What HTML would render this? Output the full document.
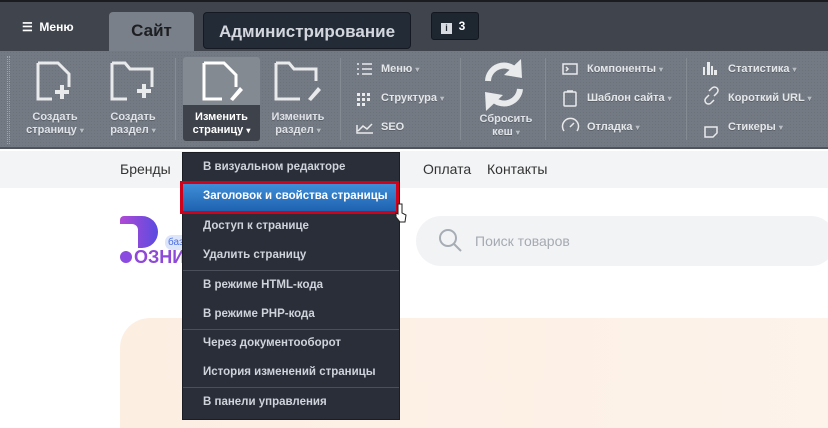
<!DOCTYPE html>
<html><head><meta charset="utf-8"><style>
*{margin:0;padding:0;box-sizing:border-box}
body{width:828px;height:420px;overflow:hidden;background:#fff;font-family:"Liberation Sans",Arial,sans-serif;position:relative}
.abs{position:absolute}
#top{left:0;top:0;width:828px;height:51px;background:#40454d;border-top:2px solid #1a1c20}
#tb{left:0;top:51px;width:828px;height:98px;background:#747a83;background-image:radial-gradient(#6c727a 0.6px,transparent 0.7px);background-size:3px 3px;border-bottom:2px solid #50555c}
.tab{top:12px;height:39px;font-weight:bold;font-size:17px;text-align:center;line-height:38px;border-radius:4px 4px 0 0}
.lbl{font-size:11px;color:#dfe3e8;text-align:center;line-height:13px;text-shadow:0 1px 0 #5a6068;font-weight:bold}
.sm{font-size:11px;color:#e4e7ea;font-weight:bold;text-shadow:0 1px 0 #5a6068}
.sep{top:58px;width:1px;height:82px;background:#656b73;border-right:1px solid #858b93}
.arr{color:#b8bdc4;font-size:8px}
#menu{left:182px;top:152px;width:218px;height:268px;background:#2a2e39;border:1px solid #1a1d24}
.it{position:absolute;left:20px;font-size:11.5px;color:#cfd3da;font-weight:bold}
.dv{position:absolute;left:0;width:216px;height:1px;background:#4a4f5a}
</style></head><body>
<div id="top" class="abs"></div>
<div class="abs" style="left:22px;top:20px;color:#fff;font-size:12px;font-weight:bold">☰&nbsp; Меню</div>
<div class="abs tab" style="left:109px;width:85px;background:#7a8089;color:#1c1e22">Сайт</div>
<div class="abs tab" style="left:203px;width:208px;height:37px;background:#232b37;color:#d4d8de;border:1px solid #151a22;border-radius:4px">Администрирование</div>
<div class="abs" style="left:431px;top:12px;width:48px;height:28px;background:#1e2630;border:1px solid #131820;border-radius:3px;color:#fff;font-weight:bold;font-size:12px;line-height:26px">
<span style="display:inline-block;margin-left:9px;width:11px;height:11px;background:#d8dce0;color:#1e2630;font-size:9px;line-height:11px;text-align:center;vertical-align:-1px">i</span>&nbsp; 3</div>
<div id="tb" class="abs"></div>
<div class="abs" style="left:7px;top:56px;width:3px;height:88px;border-left:1px dotted #a0a5ab;border-right:1px dotted #a0a5ab"></div>
<!-- active button -->
<div class="abs" style="left:183px;top:57px;width:77px;height:83px;background:#848a92;border-radius:3px"></div>
<div class="abs" style="left:183px;top:105px;width:77px;height:36px;background:#3e434b;border-radius:0 0 3px 3px"></div>
<svg class="abs" style="left:0;top:51px" width="828" height="98" fill="none" stroke="#e8eaec" stroke-width="3">
<!-- create page -->
<path d="M38 12V48H52M38 12H58L69 23V36"/><path d="M62 34V48M55 41H69" stroke-width="4"/>
<!-- create section -->
<path d="M112 12V48H127M112 12H125L130 18H152V36"/><path d="M144 33V47M137 40H151" stroke-width="4"/>
<!-- edit page -->
<path d="M204 12V48H222M204 12H224L236 24V36" stroke="#fff"/><path d="M230 48L240 36L243 39L233 50Z" fill="#fff" stroke="none"/>
<!-- edit section -->
<path d="M276 12V48H300M276 12H289L294 18H316V30"/><path d="M308 48L318 36L321 39L311 50Z" fill="#e8eaec" stroke="none"/>
<!-- refresh -->
<path d="M488 30A16 16 0 0 1 516 20" stroke-width="6"/><path d="M521 8L522 27L504 24Z" fill="#e8eaec" stroke="none"/>
<path d="M520 38A16 16 0 0 1 492 47" stroke-width="6"/><path d="M486 60L485 41L503 44Z" fill="#e8eaec" stroke="none"/>
<g stroke-width="1.5">
<path d="M362 13H372M362 18H372M362 23H372M357 13H359M357 18H359M357 23H359"/>
<path d="M357 74V82H373M358 80L363 75L367 78L372 73"/>
<rect x="563" y="13" width="14" height="10"/><path d="M566 16L568 18L566 20"/>
<rect x="564" y="41" width="12" height="14" rx="1"/><path d="M567 40H573"/>
<path d="M564 80A8 8 0 1 1 577 80M570 76L574 72"/>
<path d="M705 76H717V82L713 86H705Z"/>
<path d="M709 44L706 47A3 3 0 0 0 711 52L714 49M714 45L717 42A3 3 0 0 0 712 37L709 40"/>
</g>
<g fill="#e8eaec" stroke="none"><rect x="357" y="42" width="3" height="3"/><rect x="362" y="42" width="3" height="3"/><rect x="367" y="42" width="3" height="3"/><rect x="357" y="47" width="3" height="3"/><rect x="362" y="47" width="3" height="3"/><rect x="367" y="47" width="3" height="3"/><rect x="357" y="52" width="3" height="3"/><rect x="362" y="52" width="3" height="3"/>
<rect x="703" y="16" width="2" height="8"/><rect x="707" y="11" width="3" height="13"/><rect x="711" y="15" width="2" height="9"/><rect x="714" y="19" width="3" height="5"/></g>
</svg>
<div class="abs lbl" style="left:20px;top:111px;width:70px">Создать<br>страницу <span class="arr">▾</span></div>
<div class="abs lbl" style="left:100px;top:111px;width:66px">Создать<br>раздел <span class="arr">▾</span></div>
<div class="abs lbl" style="left:183px;top:111px;width:77px;color:#fff;text-shadow:none">Изменить<br>страницу <span style="font-size:8px">▾</span></div>
<div class="abs lbl" style="left:262px;top:111px;width:72px">Изменить<br>раздел <span class="arr">▾</span></div>
<div class="abs lbl" style="left:474px;top:113px;width:64px">Сбросить<br>кеш <span class="arr">▾</span></div>
<div class="abs sep" style="left:175px"></div><div class="abs sep" style="left:340px"></div><div class="abs sep" style="left:460px"></div><div class="abs sep" style="left:545px"></div><div class="abs sep" style="left:686px"></div>
<div class="abs sm" style="left:381px;top:63px">Меню <span class="arr">▾</span></div>
<div class="abs sm" style="left:381px;top:92px">Структура <span class="arr">▾</span></div>
<div class="abs sm" style="left:381px;top:121px">SEO</div>
<div class="abs sm" style="left:587px;top:63px">Компоненты <span class="arr">▾</span></div>
<div class="abs sm" style="left:587px;top:92px">Шаблон сайта <span class="arr">▾</span></div>
<div class="abs sm" style="left:587px;top:121px">Отладка <span class="arr">▾</span></div>
<div class="abs sm" style="left:728px;top:63px">Статистика <span class="arr">▾</span></div>
<div class="abs sm" style="left:728px;top:92px">Короткий URL <span class="arr">▾</span></div>
<div class="abs sm" style="left:728px;top:121px">Стикеры <span class="arr">▾</span></div>
<!-- page -->
<div class="abs" style="left:0;top:151px;width:828px;height:37px;background:#f3f4f6"></div>
<div class="abs" style="left:120px;top:161px;font-size:14px;color:#333">Бренды</div>
<div class="abs" style="left:320px;top:161px;font-size:14px;color:#333">Доставка</div>
<div class="abs" style="left:423px;top:161px;font-size:14px;color:#333">Оплата</div>
<div class="abs" style="left:487px;top:161px;font-size:14px;color:#333">Контакты</div>
<div class="abs" style="left:120px;top:216px;width:38px;height:32px;border-radius:4px 16px 16px 4px;background:linear-gradient(90deg,#b04ad6,#5a4be0)"></div>
<div class="abs" style="left:120px;top:224px;width:18px;height:24px;background:#fff;border-radius:0 6px 0 0"></div>
<div class="abs" style="left:120px;top:251px;width:12px;height:12px;border-radius:50%;background:#8a4be0"></div>
<div class="abs" style="left:134px;top:247px;font-size:18px;color:#8e49d8;font-weight:bold">ОЗНИЦА</div>
<div class="abs" style="left:165px;top:235px;width:40px;height:15px;border-radius:7px;background:#dde5fb;color:#4a6ee0;font-size:10px;line-height:15px;padding-left:3px">базовая</div>
<div class="abs" style="left:250px;top:218px;width:150px;height:47px;border-radius:24px;background:#2a2e39"></div>
<div class="abs" style="left:416px;top:216px;width:420px;height:50px;border-radius:25px;background:#f2f3f5"></div>
<svg class="abs" style="left:436px;top:226px" width="30" height="30" fill="none" stroke="#a7adb5" stroke-width="2"><circle cx="12" cy="12" r="8"/><path d="M18 18L25 25"/></svg>
<div class="abs" style="left:475px;top:233px;font-size:14px;color:#a5aab2">Поиск товаров</div>
<div class="abs" style="left:120px;top:318px;width:720px;height:110px;border-radius:30px 0 0 0;background:linear-gradient(90deg,#fdeee2,#fdf3ea)"></div>
<!-- dropdown -->
<div id="menu" class="abs">
<div class="it" style="top:8px">В визуальном редакторе</div>
<div style="position:absolute;left:-3px;top:28px;width:219px;height:33px;border:3px solid #d0021b;background:linear-gradient(#3f8ed8,#1e62b0)"></div>
<div class="it" style="top:37px;color:#fff">Заголовок и свойства страницы</div>
<div class="it" style="top:67px">Доступ к странице</div>
<div class="it" style="top:96px">Удалить страницу</div>
<div class="dv" style="top:117px"></div>
<div class="it" style="top:126px">В режиме HTML-кода</div>
<div class="it" style="top:155px">В режиме PHP-кода</div>
<div class="dv" style="top:176px"></div>
<div class="it" style="top:184px">Через документооборот</div>
<div class="it" style="top:213px">История изменений страницы</div>
<div class="dv" style="top:234px"></div>
<div class="it" style="top:243px">В панели управления</div>
</div>
<svg class="abs" style="left:394px;top:202px" width="14" height="22"><path d="M4 2V12L2 11V15L6 20H11L12 13L8 11V2Z" fill="#fff" stroke="#222" stroke-width="1"/></svg>
</body></html>
